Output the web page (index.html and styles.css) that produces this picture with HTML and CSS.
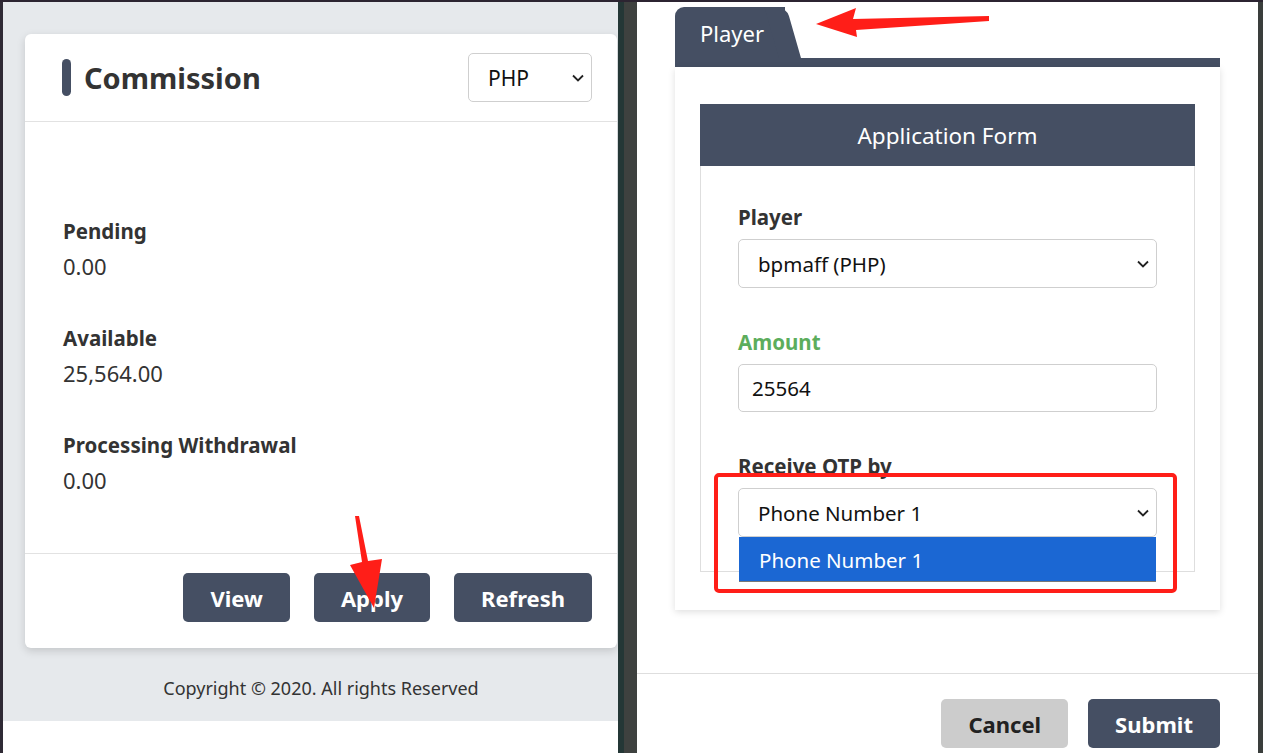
FILE: index.html
```html
<!DOCTYPE html>
<html lang="en">
<head>
  <meta charset="UTF-8" />
  <meta name="viewport" content="width=device-width, initial-scale=1.0"/>
  <title>Commission</title>
  <link rel="stylesheet" href="styles.css">
</head>
<body>

<div class="screen">

  <!-- left: commission card -->
  <section class="left-pane">
    <div class="left-bg">
      <div class="card">
        <div class="card-head">
          <h2 class="card-title">Commission</h2>
          <div class="select select-currency">
            <span>PHP</span>
            <svg class="chev" width="12" height="8" viewBox="0 0 12 8"><path d="M1 1.5 L6 6.5 L11 1.5"/></svg>
          </div>
        </div>
        <div class="card-body">
          <div class="stat">
            <div class="stat-label">Pending</div>
            <div class="stat-value">0.00</div>
          </div>
          <div class="stat">
            <div class="stat-label">Available</div>
            <div class="stat-value">25,564.00</div>
          </div>
          <div class="stat">
            <div class="stat-label">Processing Withdrawal</div>
            <div class="stat-value">0.00</div>
          </div>
        </div>
        <div class="card-foot">
          <button class="btn">View</button>
          <button class="btn">Apply</button>
          <button class="btn">Refresh</button>
        </div>
      </div>
      <p class="copyright">Copyright &copy; 2020. All rights Reserved</p>
    </div>
  </section>

  <div class="divider"></div>

  <!-- right: application form -->
  <section class="right-pane">
    <div class="right-inner">
      <div class="tab">Player</div>
      <div class="tab-bar"></div>
      <div class="panel">
        <div class="form-box">
          <div class="form-head">Application Form</div>
          <div class="form-body">
            <div class="field">
              <label class="field-label">Player</label>
              <div class="select">
                <span>bpmaff (PHP)</span>
                <svg class="chev" width="12" height="8" viewBox="0 0 12 8"><path d="M1 1.5 L6 6.5 L11 1.5"/></svg>
              </div>
            </div>
            <div class="field">
              <label class="field-label label-ok">Amount</label>
              <div class="input">25564</div>
            </div>
            <div class="field">
              <label class="field-label">Receive OTP by</label>
              <div class="select-wrap">
                <div class="select">
                  <span>Phone Number 1</span>
                  <svg class="chev" width="12" height="8" viewBox="0 0 12 8"><path d="M1 1.5 L6 6.5 L11 1.5"/></svg>
                </div>
                <div class="dropdown">Phone Number 1</div>
              </div>
            </div>
          </div>
        </div>
      </div>
    </div>
    <div class="modal-foot">
      <button class="btn btn-grey">Cancel</button>
      <button class="btn">Submit</button>
    </div>
  </section>

  <div class="edge"></div>

  <!-- annotation marks -->
  <svg class="marks" width="1263" height="753" viewBox="0 0 1263 753">
    <polygon points="816,24 856,8 853,19 989,16 989,21 856,30 857,37" fill="#ff1e18"/>
    <polygon points="355,516 359,516 368,561 382,559 374,608 350,565 362,562" fill="#ff1e18"/>
    <rect x="716" y="475" width="459" height="116" rx="3" fill="none" stroke="#ff1e18" stroke-width="4"/>
  </svg>
</div>

</body>
</html>
```

FILE: styles.css
```css
body {
  margin: 0;
  padding: 0;
  font-family: "Noto Sans", "Open Sans", Arial, sans-serif;
  color: #333;
  background: #fff;
}

.screen {
  position: relative;
  display: flex;
  height: 751px;
  border-top: 2px solid #2c2431;
  overflow: hidden;
}

/* left pane */
.left-pane {
  width: 615px;
  border-left: 3px solid #2f2a35;
  background: #fff;
  flex-shrink: 0;
}

.left-bg {
  background: #e6e9ec;
  padding: 32px 1px 21px 22px;
}

.card {
  background: #fff;
  border-radius: 6px;
  box-shadow: 0 3px 8px rgba(0, 0, 0, 0.15);
}

.card-head {
  height: 87px;
  border-bottom: 1px solid #e2e2e2;
  display: flex;
  align-items: center;
  justify-content: space-between;
  padding: 0 25px 0 37px;
}

.card-title {
  margin: 0;
  font-size: 29px;
  font-weight: 700;
  line-height: 40px;
  display: flex;
  align-items: center;
  gap: 13px;
}

.card-title::before {
  content: "";
  width: 9px;
  height: 37px;
  border-radius: 5px;
  background: #454f63;
}

.select {
  height: 49px;
  box-sizing: border-box;
  border: 1px solid #cfcfcf;
  border-radius: 5px;
  background: #fff;
  display: flex;
  align-items: center;
  justify-content: space-between;
  padding: 0 7px 0 19px;
  font-size: 20.5px;
  color: #111;
}

.select-currency {
  width: 124px;
  font-size: 21px;
}

.chev {
  fill: none;
  stroke: #222;
  stroke-width: 1.8;
}

.card-body {
  height: 431px;
  box-sizing: border-box;
  padding: 94px 37px 0 38px;
  display: flex;
  flex-direction: column;
  gap: 42px;
}

.stat-label {
  font-size: 20.5px;
  font-weight: 700;
  line-height: 30px;
}

.stat-value {
  font-size: 22px;
  line-height: 30px;
  margin-top: 5px;
}

.card-foot {
  border-top: 1px solid #e2e2e2;
  padding: 19px 25px 26px;
  display: flex;
  justify-content: flex-end;
  gap: 24px;
}

.btn {
  height: 49px;
  padding: 0 27px;
  border: none;
  border-radius: 5px;
  background: #454f63;
  color: #fff;
  font-family: inherit;
  font-size: 22px;
  font-weight: 700;
  cursor: pointer;
}

.btn-grey {
  background: #cccccc;
  color: #222;
}

.copyright {
  margin: 0;
  padding-top: 28px;
  text-align: center;
  font-size: 18px;
  line-height: 24px;
  color: #333;
}

/* divider between the two shots */
.divider {
  width: 13px;
  border-left: 6px solid #243736;
  background: #3e413f;
  flex-shrink: 0;
}

/* right pane */
.right-pane {
  width: 621px;
  background: #fff;
  flex-shrink: 0;
}

.right-inner {
  padding: 5px 38px 0;
}

.tab {
  position: relative;
  width: 85px;
  height: 51px;
  line-height: 53px;
  padding-left: 25px;
  background: #454f63;
  border-radius: 9px 0 0 0;
  color: #fff;
  font-size: 22px;
}

.tab::after {
  content: "";
  position: absolute;
  top: 0;
  left: 104px;
  width: 22px;
  height: 100%;
  background: #454f63;
  border-top-right-radius: 9px;
  transform: skewX(16deg);
  transform-origin: bottom left;
}

.tab-bar {
  height: 9px;
  background: #454f63;
}

.panel {
  background: #fff;
  box-shadow: 0 2px 7px rgba(0, 0, 0, 0.13);
  padding: 37px 25px 38px;
}

.form-head {
  height: 62px;
  line-height: 64px;
  background: #454f63;
  color: #fff;
  text-align: center;
  font-size: 22.5px;
}

.form-body {
  border: 1px solid #dedede;
  border-top: none;
  padding: 37px 37px 34px;
  display: flex;
  flex-direction: column;
  gap: 40px;
}

.field {
  display: flex;
  flex-direction: column;
  gap: 8px;
}

.field-label {
  font-size: 20.5px;
  font-weight: 700;
  line-height: 28px;
  color: #333;
}

.label-ok {
  color: #5cad5c;
}

.input {
  height: 48px;
  box-sizing: border-box;
  border: 1px solid #cfcfcf;
  border-radius: 5px;
  padding: 0 13px;
  display: flex;
  align-items: center;
  font-size: 20.5px;
  color: #111;
}

.select-wrap {
  position: relative;
}

.dropdown {
  position: absolute;
  top: 100%;
  left: 1px;
  right: 1px;
  height: 44px;
  line-height: 46px;
  padding-left: 20px;
  background: #1b67d3;
  border-bottom: 1px solid #777;
  color: #fff;
  font-size: 20.5px;
}

.modal-foot {
  margin-top: 63px;
  border-top: 1px solid #dedede;
  padding: 25px 38px 0;
  display: flex;
  justify-content: flex-end;
  gap: 20px;
}

.edge {
  flex: 1;
  background: #3a3e3c;
}

.marks {
  position: absolute;
  top: -2px;
  left: 0;
  pointer-events: none;
}
```
